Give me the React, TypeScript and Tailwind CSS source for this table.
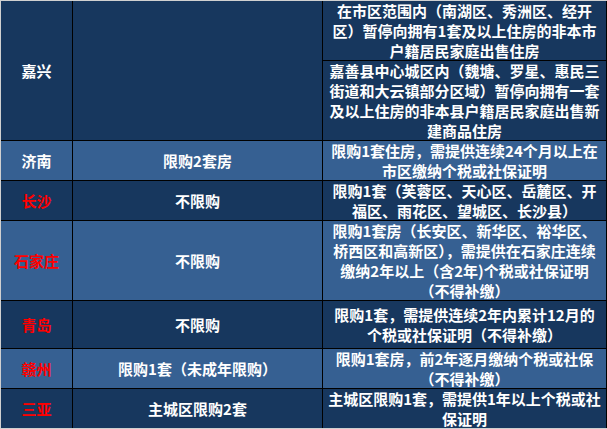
import React from "react";

const DARK = "bg-[#17375e]";
const LIGHT = "bg-[#366092]";

function Lines({ lines }: { lines: string[] }) {
  return (
    <div className="text-center">
      {lines.map((l, i) => (
        <div key={i} className="whitespace-nowrap">{l}</div>
      ))}
    </div>
  );
}

type Row = {
  city: string;
  red: boolean;
  mid: string;
  right: string[];
  h: string;
  bg: string;
  last?: boolean;
};

const rows: Row[] = [
  {
    city: "济南",
    red: false,
    mid: "限购2套房",
    right: ["限购1套住房，需提供连续24个月以上在", "市区缴纳个税或社保证明"],
    h: "h-[40px]",
    bg: LIGHT,
  },
  {
    city: "长沙",
    red: true,
    mid: "不限购",
    right: ["限购1套（芙蓉区、天心区、岳麓区、开", "福区、雨花区、望城区、长沙县）"],
    h: "h-[40px]",
    bg: DARK,
  },
  {
    city: "石家庄",
    red: true,
    mid: "不限购",
    right: [
      "限购1套房（长安区、新华区、裕华区、",
      "桥西区和高新区），需提供在石家庄连续",
      "缴纳2年以上（含2年)个税或社保证明",
      "（不得补缴）",
    ],
    h: "h-[80px]",
    bg: LIGHT,
  },
  {
    city: "青岛",
    red: true,
    mid: "不限购",
    right: ["限购1套，需提供连续2年内累计12月的", "个税或社保证明（不得补缴）"],
    h: "h-[48px]",
    bg: DARK,
  },
  {
    city: "赣州",
    red: true,
    mid: "限购1套（未成年限购）",
    right: ["限购1套房，前2年逐月缴纳个税或社保", "（不得补缴）"],
    h: "h-[40px]",
    bg: LIGHT,
  },
  {
    city: "三亚",
    red: true,
    mid: "主城区限购2套",
    right: ["主城区限购1套，需提供1年以上个税或社", "保证明"],
    h: "h-[40px]",
    bg: DARK,
    last: true,
  },
];

export default function App() {
  return (
    <div
      className="w-[607px] h-[429px] border-t border-l border-[#d0d0d0] text-white text-[15px] leading-[20px] font-bold overflow-hidden"
      style={{ fontFamily: '"Noto Sans CJK SC", "Noto Sans", sans-serif' }}
    >
      {/* 嘉兴 */}
      <div className={`flex h-[140px] border-b border-black ${DARK}`}>
        <div className="w-[72px] shrink-0 border-r border-black flex items-center justify-center">
          嘉兴
        </div>
        <div className="w-[250px] shrink-0 border-r border-black" />
        <div className="flex-1 flex flex-col border-r border-black">
          <div className="h-[60px] border-b border-black flex items-center justify-center">
            <Lines
              lines={[
                "在市区范围内（南湖区、秀洲区、经开",
                "区）暂停向拥有1套及以上住房的非本市",
                "户籍居民家庭出售住房",
              ]}
            />
          </div>
          <div className="flex-1 flex items-center justify-center">
            <Lines
              lines={[
                "嘉善县中心城区内（魏塘、罗星、惠民三",
                "街道和大云镇部分区域）暂停向拥有一套",
                "及以上住房的非本县户籍居民家庭出售新",
                "建商品住房",
              ]}
            />
          </div>
        </div>
      </div>
      {rows.map((r) => (
        <div
          key={r.city}
          className={`flex ${r.h} ${r.bg} ${r.last ? "border-b border-[#d0d0d0]" : "border-b border-black"}`}
        >
          <div
            className={`w-[72px] shrink-0 border-r border-black flex items-center justify-center ${
              r.red ? "text-[#ff0000]" : "text-white"
            }`}
          >
            {r.city}
          </div>
          <div className="w-[250px] shrink-0 border-r border-black flex items-center justify-center">
            {r.mid}
          </div>
          <div className="flex-1 border-r border-black flex items-center justify-center">
            <Lines lines={r.right} />
          </div>
        </div>
      ))}
    </div>
  );
}
